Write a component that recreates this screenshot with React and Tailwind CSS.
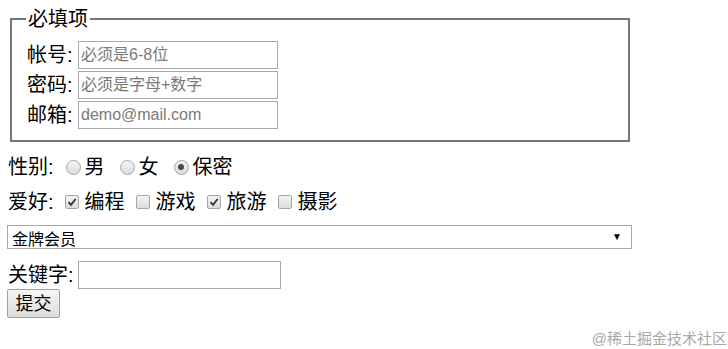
// 表单示例页：必填项 + 性别 / 爱好 / 会员 / 关键字

const FONT = '"Liberation Sans", "Noto Sans CJK SC", sans-serif';

function Radio({ checked }) {
  return (
    <span className="inline-flex items-center justify-center w-[15px] h-[15px] rounded-full border border-[#a6a6a6] bg-gradient-to-b from-[#f4f4f4] to-[#dcdcdc] shrink-0">
      {checked && <span className="w-[6px] h-[6px] rounded-full bg-[#4a4a4a]" />}
    </span>
  );
}

function Checkbox({ checked }) {
  return (
    <span className="inline-flex items-center justify-center w-[14px] h-[14px] rounded-[2px] border border-[#a6a6a6] bg-gradient-to-b from-[#f4f4f4] to-[#dcdcdc] shrink-0">
      {checked && (
        <svg width="10" height="10" viewBox="0 0 10 10">
          <path d="M1.5 5.2 L4 7.8 L8.6 2" fill="none" stroke="#333" strokeWidth="1.8" />
        </svg>
      )}
    </span>
  );
}

// 必填项的一行：标签 + 输入框
function FieldRow({ label, placeholder }) {
  return (
    <div className="flex items-center h-[30px]">
      <span className="text-[20px] leading-[30px] w-[51px]">{label}</span>
      <input
        className="w-[200px] h-[28px] border border-[#a9a9a9] px-[2px] text-[16px] placeholder:text-[#7a7a7a] outline-none"
        placeholder={placeholder}
        style={{ fontFamily: FONT }}
      />
    </div>
  );
}

export default function App() {
  const radios = [
    { label: "男", checked: false },
    { label: "女", checked: false },
    { label: "保密", checked: true },
  ];
  const hobbies = [
    { label: "编程", checked: true },
    { label: "游戏", checked: false },
    { label: "旅游", checked: true },
    { label: "摄影", checked: false },
  ];

  return (
    <div
      className="relative w-[728px] h-[349px] bg-white text-black overflow-hidden"
      style={{ fontFamily: FONT }}
    >
      <div className="pl-[7px] w-[640px]">
        {/* 必填项 */}
        <fieldset className="ml-[3px] mt-[8px] w-[620px] border-2 border-[#767676] px-[15px] pb-[10px]">
          <legend className="ml-[-1px] px-[2px] text-[20px] leading-[22px]">必填项</legend>
          <div className="pt-[10px]">
            <FieldRow label="帐号:" placeholder="必须是6-8位" />
            <FieldRow label="密码:" placeholder="必须是字母+数字" />
            <FieldRow label="邮箱:" placeholder="demo@mail.com" />
          </div>
        </fieldset>

        {/* 性别 */}
        <div className="flex items-center h-[30px] mt-[10px] pl-[1px] text-[20px]">
          <span className="mr-[12px]">性别:</span>
          {radios.map((r) => (
            <span key={r.label} className="flex items-center mr-[15px]">
              <Radio checked={r.checked} />
              <span className="ml-[4px]">{r.label}</span>
            </span>
          ))}
        </div>

        {/* 爱好 */}
        <div className="flex items-center h-[30px] mt-[5px] pl-[1px] text-[20px]">
          <span className="mr-[11px]">爱好:</span>
          {hobbies.map((h) => (
            <span key={h.label} className="flex items-center mr-[11px]">
              <Checkbox checked={h.checked} />
              <span className="ml-[6px]">{h.label}</span>
            </span>
          ))}
        </div>

        {/* 会员 */}
        <div className="flex items-center justify-between mt-[8px] w-[625px] h-[24px] border border-[#a9a9a9] pl-[4px] pr-[9px] overflow-hidden">
          <span className="text-[16px] leading-[24px] pt-[5px]">金牌会员</span>
          <span className="text-[10px] leading-none">▼</span>
        </div>

        {/* 关键字 */}
        <div className="flex items-center h-[29px] mt-[11px] pl-[1px]">
          <span className="text-[20px] w-[70px]">关键字:</span>
          <input
            className="w-[203px] h-[28px] border border-[#a9a9a9] px-[2px] text-[16px] outline-none"
            style={{ fontFamily: FONT }}
          />
        </div>

        <button
          className="w-[53px] h-[29px] border border-[#a0a0a0] rounded-[2px] bg-gradient-to-b from-[#f6f6f6] to-[#dddddd] text-[18px] leading-none"
          style={{ fontFamily: FONT }}
        >
          提交
        </button>
      </div>

      {/* 水印 */}
      <span className="absolute right-[1px] bottom-[1px] text-[15px] leading-[18px] text-[#a8a8a8]">
        @稀土掘金技术社区
      </span>
    </div>
  );
}
